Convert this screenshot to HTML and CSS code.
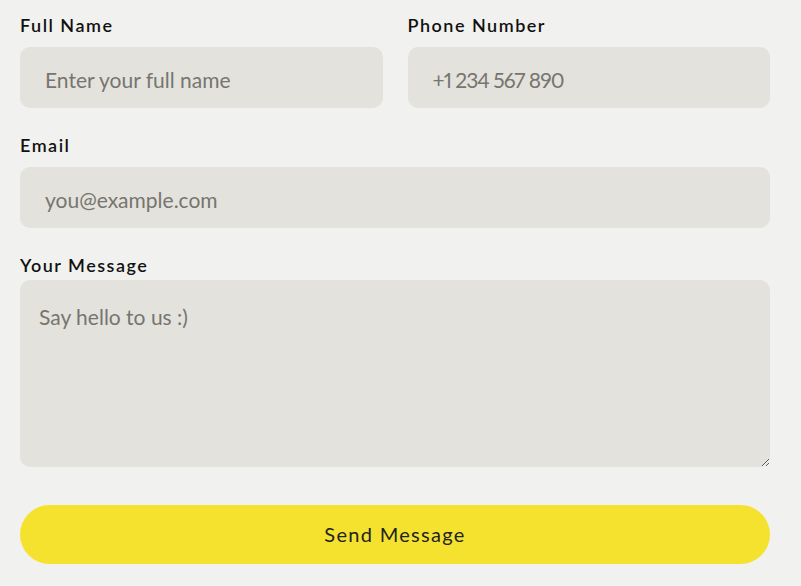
FILE: index.html
```html
<!DOCTYPE html>
<html lang="en">
<head>
    <meta charset="UTF-8">
    <meta name="viewport" content="width=device-width, initial-scale=1.0">
    <title>Contact</title>
    <link rel="stylesheet" href="styles.css">
</head>
<body>
    <form class="contact-form">
        <div class="row">
            <div class="field">
                <label for="name">Full Name</label>
                <input id="name" type="text" placeholder="Enter your full name">
            </div>
            <div class="field">
                <label for="phone">Phone Number</label>
                <input id="phone" class="phone-input" type="tel" placeholder="+1 234 567 890">
            </div>
        </div>
        <div class="field">
            <label for="email">Email</label>
            <input id="email" type="email" placeholder="you@example.com">
        </div>
        <div class="field message-field">
            <label for="message">Your Message</label>
            <textarea id="message" placeholder="Say hello to us :)"></textarea>
        </div>
        <button type="submit" class="send-btn">Send Message</button>
    </form>
</body>
</html>
```

FILE: styles.css
```css
body {
    font-family: 'Lato', sans-serif;
    background-color: #f1f1ef;
    color: #111;
    margin: 0;
    padding: 13px 31px 0 20px;
}
.contact-form {
    display: flex;
    flex-direction: column;
}
.row {
    display: grid;
    grid-template-columns: 1fr 1fr;
    gap: 25px;
}
.field {
    display: flex;
    flex-direction: column;
    margin-bottom: 25px;
}
.field label {
    font-size: 18px;
    line-height: 24px;
    font-weight: 600;
    letter-spacing: 1.5px;
    margin-bottom: 10px;
}
.field input,
.field textarea {
    font-family: 'Lato', sans-serif;
    font-size: 21px;
    color: #333;
    background-color: #e4e2dc;
    border: none;
    border-radius: 10px;
    outline: none;
    box-sizing: border-box;
    font-variant-numeric: proportional-nums;
}
.field input {
    height: 61px;
    padding: 4px 25px 0;
}
.field input.phone-input {
    letter-spacing: -1px;
}
.field textarea {
    height: 187px;
    padding: 24px 19px;
    resize: vertical;
}
.message-field label {
    margin-bottom: 3px;
}
::placeholder {
    color: #76756f;
    opacity: 1;
}
.message-field {
    margin-bottom: 38px;
}
.send-btn {
    height: 59px;
    border: none;
    border-radius: 30px;
    background-color: #f4e22f;
    color: #222;
    font-family: 'Lato', sans-serif;
    font-size: 20px;
    font-weight: 400;
    letter-spacing: 1.3px;
    padding-bottom: 2px;
    cursor: pointer;
}
```
